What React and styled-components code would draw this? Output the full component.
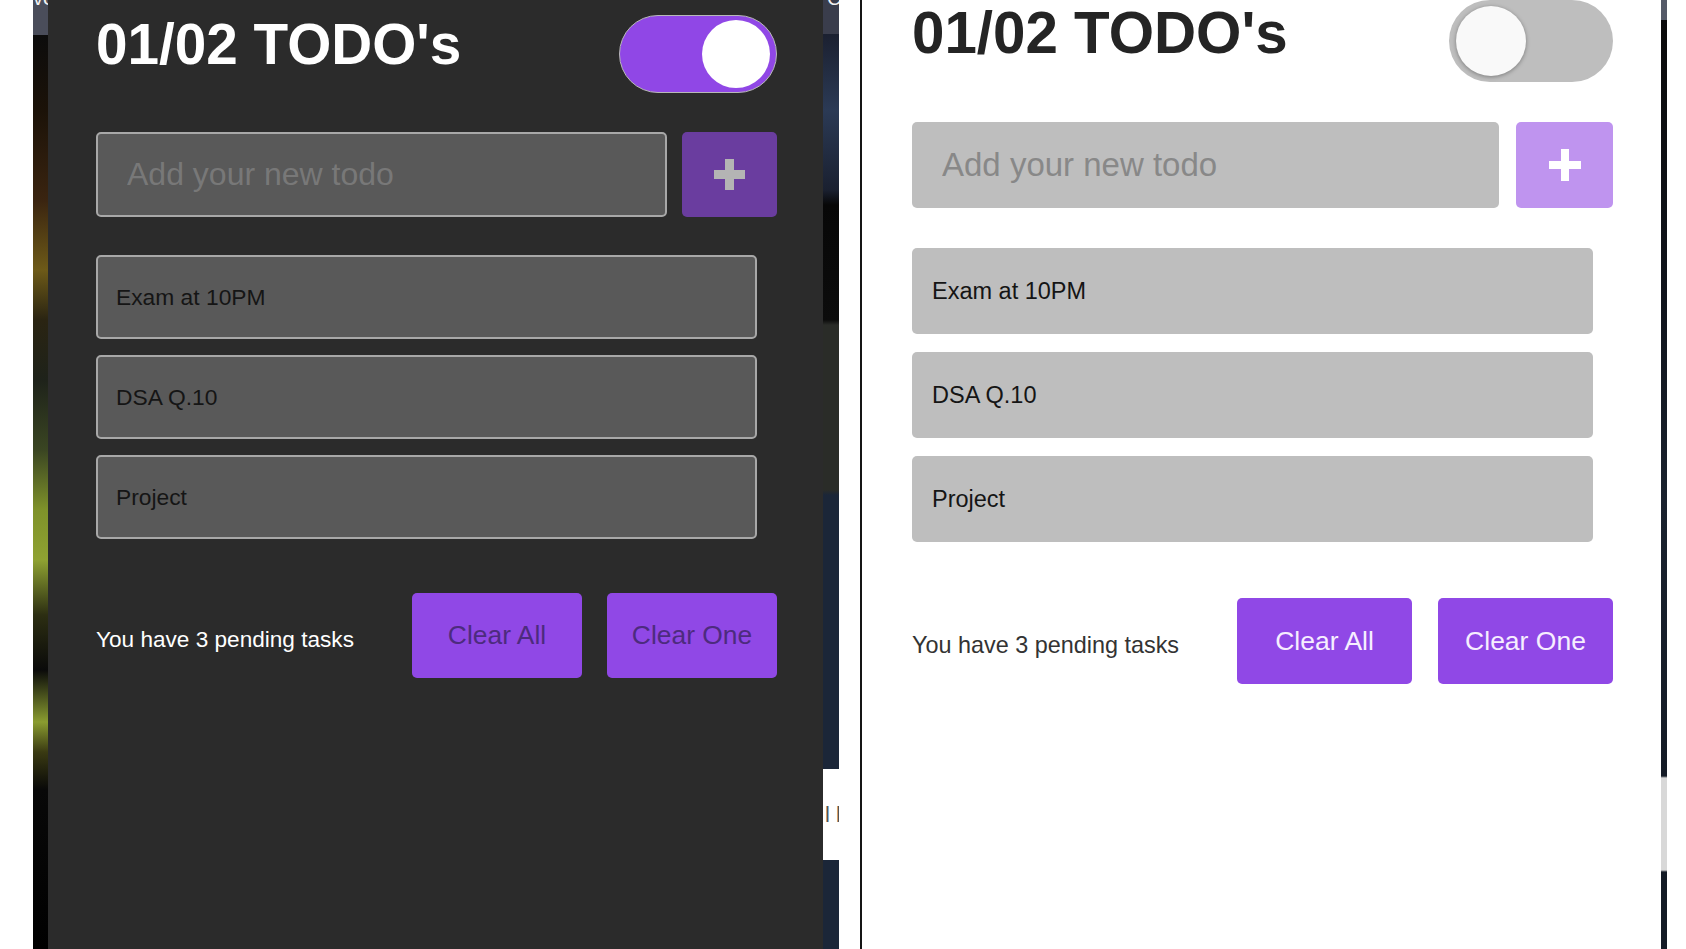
import React from "react";
import styled, { createGlobalStyle } from "styled-components";

const GlobalStyle = createGlobalStyle`
  html, body { margin: 0; padding: 0; background: #fff; }
  body { font-family: "Liberation Sans", Arial, sans-serif; }
  * { box-sizing: border-box; }
`;

const Page = styled.div`
  display: flex;
  width: 1686px;
  height: 949px;
  overflow: hidden;
  background: #fff;
`;

const Desktop = styled.div`
  display: flex;
  margin-left: 33px;
  height: 100%;
`;

const WallStrip = styled.div`
  width: ${(p) => p.$w}px;
  height: 100%;
  flex-shrink: 0;
  display: flex;
  flex-direction: column;
  overflow: hidden;
  background: ${(p) => p.$bg};
`;

const TabGlyph = styled.span`
  display: block;
  margin-top: -13px;
  font-size: 20px;
  line-height: 22px;
  color: #f2f2f2;
  white-space: nowrap;
  padding-left: ${(p) => p.$pl || 0}px;
`;

const NoteChip = styled.div`
  margin-top: ${(p) => p.$top}px;
  height: ${(p) => p.$h}px;
  background: ${(p) => p.$bg};
  color: #555;
  font-size: 22px;
  line-height: ${(p) => p.$h}px;
  white-space: nowrap;
  overflow: hidden;
  padding-left: 2px;
`;

const PhoneShot = styled.div`
  display: flex;
  margin-left: 21px;
  height: 100%;
  border-left: 2px solid #151515;
`;

const Panel = styled.section`
  width: ${(p) => p.$w}px;
  height: 100%;
  flex-shrink: 0;
  background: ${(p) => (p.$dark ? "#2b2b2b" : "#ffffff")};
  padding: ${(p) => p.$pt}px ${(p) => p.$pr}px 0 ${(p) => p.$pl}px;
  display: flex;
  flex-direction: column;
`;

const Header = styled.header`
  display: flex;
  justify-content: space-between;
  align-items: flex-start;
`;

const Title = styled.h1`
  margin: ${(p) => p.$mt}px 0 0;
  font-size: ${(p) => p.$fs}px;
  line-height: 1;
  font-weight: 700;
  color: ${(p) => (p.$dark ? "#ffffff" : "#242424")};
`;

const Toggle = styled.div`
  width: ${(p) => p.$w}px;
  height: ${(p) => p.$h}px;
  flex-shrink: 0;
  border-radius: 999px;
  background: ${(p) => (p.$on ? "#9047e6" : "#bebebe")};
  border: ${(p) => (p.$on ? "1.5px solid #b8b8b8" : "none")};
  display: flex;
  align-items: center;
  justify-content: ${(p) => (p.$on ? "flex-end" : "flex-start")};
  padding: 0 ${(p) => p.$pad}px;
`;

const Knob = styled.span`
  width: ${(p) => p.$d}px;
  height: ${(p) => p.$d}px;
  border-radius: 50%;
  background: ${(p) => (p.$on ? "#ffffff" : "#f9f9f9")};
  box-shadow: ${(p) => (p.$on ? "none" : "0 1px 4px rgba(0,0,0,0.35)")};
`;

const InputRow = styled.div`
  display: flex;
  gap: ${(p) => p.$gap}px;
  margin-top: ${(p) => p.$mt}px;
`;

const TodoInput = styled.input`
  flex: 1;
  min-width: 0;
  height: ${(p) => p.$h}px;
  margin: 0;
  background: ${(p) => (p.$dark ? "#595959" : "#bebebe")};
  border: ${(p) => (p.$dark ? "2px solid #a8a8a8" : "none")};
  border-radius: 5px;
  padding: 0 0 0 ${(p) => p.$pl}px;
  font-family: "Liberation Sans", Arial, sans-serif;
  font-size: ${(p) => p.$fs}px;
  color: #222;
  outline: none;
  &::placeholder {
    color: ${(p) => (p.$dark ? "#787878" : "#888888")};
  }
`;

const AddButton = styled.button`
  width: ${(p) => p.$w}px;
  height: ${(p) => p.$h}px;
  flex-shrink: 0;
  border: none;
  border-radius: 5px;
  padding: 0;
  background: ${(p) => (p.$dark ? "#6a3d9f" : "#bf94ef")};
  display: flex;
  align-items: center;
  justify-content: center;
`;

const TodoList = styled.ul`
  list-style: none;
  margin: ${(p) => p.$mt}px 20px 0 0;
  padding: 0;
  display: flex;
  flex-direction: column;
  gap: ${(p) => p.$gap}px;
`;

const TodoItem = styled.li`
  height: ${(p) => p.$h}px;
  background: ${(p) => (p.$dark ? "#595959" : "#bebebe")};
  border: ${(p) => (p.$dark ? "2px solid #a8a8a8" : "none")};
  border-radius: 5px;
  display: flex;
  align-items: center;
  padding-left: ${(p) => p.$pl}px;
  font-size: ${(p) => p.$fs}px;
  color: #151515;
`;

const Footer = styled.footer`
  display: flex;
  align-items: center;
  justify-content: space-between;
  margin-top: ${(p) => p.$mt}px;
`;

const Pending = styled.span`
  padding-top: 8px;
  font-size: ${(p) => p.$fs}px;
  color: ${(p) => (p.$dark ? "#ffffff" : "#333333")};
`;

const ButtonGroup = styled.div`
  display: flex;
  gap: ${(p) => p.$gap}px;
`;

const ClearButton = styled.button`
  width: ${(p) => p.$w}px;
  height: ${(p) => p.$h}px;
  border: none;
  border-radius: 5px;
  background: #9048e6;
  color: ${(p) => (p.$dark ? "#4d2b7e" : "#f6eeff")};
  font-family: "Liberation Sans", Arial, sans-serif;
  font-size: ${(p) => p.$fs}px;
  padding: 0;
`;

const PlusIcon = ({ size, thick, color }) => (
  <svg width={size} height={size} viewBox={`0 0 ${size} ${size}`}>
    <rect x={(size - thick) / 2} y={0} width={thick} height={size} fill={color} />
    <rect x={0} y={(size - thick) / 2} width={size} height={thick} fill={color} />
  </svg>
);

const TODOS = ["Exam at 10PM", "DSA Q.10", "Project"];

const TodoCard = ({ c }) => (
  <Panel $dark={c.dark} $w={c.w} $pt={c.pt} $pl={c.pl} $pr={c.pr}>
    <Header>
      <Title $dark={c.dark} $fs={c.titleFs} $mt={c.titleMt}>
        01/02 TODO's
      </Title>
      <Toggle $on={c.dark} $w={c.tog.w} $h={c.tog.h} $pad={c.tog.pad}>
        <Knob $on={c.dark} $d={c.tog.d} />
      </Toggle>
    </Header>
    <InputRow $gap={c.inp.gap} $mt={c.inp.mt}>
      <TodoInput
        $dark={c.dark}
        $h={c.inp.h}
        $pl={c.inp.pl}
        $fs={c.inp.fs}
        placeholder="Add your new todo"
        readOnly
      />
      <AddButton $dark={c.dark} $w={c.inp.bw} $h={c.inp.h} aria-label="Add">
        <PlusIcon size={c.plus.size} thick={c.plus.thick} color={c.plus.color} />
      </AddButton>
    </InputRow>
    <TodoList $mt={c.list.mt} $gap={c.list.gap}>
      {TODOS.map((t) => (
        <TodoItem key={t} $dark={c.dark} $h={c.list.h} $pl={c.list.pl} $fs={c.list.fs}>
          {t}
        </TodoItem>
      ))}
    </TodoList>
    <Footer $mt={c.foot.mt}>
      <Pending $dark={c.dark} $fs={c.foot.fs}>
        You have 3 pending tasks
      </Pending>
      <ButtonGroup $gap={c.foot.gap}>
        <ClearButton $dark={c.dark} $w={c.foot.bw} $h={c.foot.bh} $fs={c.foot.bfs}>
          Clear All
        </ClearButton>
        <ClearButton $dark={c.dark} $w={c.foot.bw} $h={c.foot.bh} $fs={c.foot.bfs}>
          Clear One
        </ClearButton>
      </ButtonGroup>
    </Footer>
  </Panel>
);

const DARK = {
  dark: true,
  w: 775,
  pt: 15,
  pl: 48,
  pr: 46,
  titleFs: 56.7,
  titleMt: 1.5,
  tog: { w: 158, h: 78, pad: 6, d: 68 },
  inp: { mt: 39, h: 85, gap: 15, bw: 95, pl: 29, fs: 32 },
  plus: { size: 31, thick: 9, color: "#b4b4b4" },
  list: { mt: 38, gap: 16, h: 84, pl: 18, fs: 22.8 },
  foot: { mt: 54, fs: 22.6, gap: 25, bw: 170, bh: 85, bfs: 26.4 },
};

const LIGHT = {
  dark: false,
  w: 799,
  pt: 0,
  pl: 50,
  pr: 48,
  titleFs: 58.3,
  titleMt: 3.5,
  tog: { w: 164, h: 82, pad: 7, d: 70 },
  inp: { mt: 40, h: 86, gap: 17, bw: 97, pl: 30, fs: 33 },
  plus: { size: 32, thick: 8, color: "#ffffff" },
  list: { mt: 40, gap: 18, h: 86, pl: 20, fs: 23.5 },
  foot: { mt: 56, fs: 23.4, gap: 26, bw: 175, bh: 86, bfs: 26.5 },
};

const LEFT_WALL = `linear-gradient(to bottom,
  #4a4d5a 0, #4a4d5a 35px, #0c0c0c 35px, #1b1208 110px, #3a2410 200px,
  #6d5a18 270px, #2a2412 320px, #1e221a 380px, #3a4522 450px, #7f922a 510px,
  #8fa232 560px, #2c2e12 615px, #0a0a0a 670px, #8a9c30 722px, #3a3a12 752px,
  #080808 790px, #000000 949px)`;

const RIGHT_WALL = `linear-gradient(to bottom,
  #3a3d4c 0, #3a3d4c 34px, #1b2030 34px, #2b3a55 110px, #1a2030 190px,
  #070707 205px, #0c0c0c 320px, #2a2c28 325px, #2a2c28 490px,
  #1b2638 495px, #1b2638 949px)`;

const EDGE_WALL = `linear-gradient(to bottom,
  #555a68 0, #555a68 20px, #0b0b0b 20px, #10141c 300px, #1a222e 500px,
  #141b26 776px, #d8d8d8 778px, #d8d8d8 870px, #141b26 872px, #141b26 949px)`;

export default function App() {
  return (
    <>
      <GlobalStyle />
      <Page>
        <Desktop>
          <WallStrip $w={15} $bg={LEFT_WALL}>
            <TabGlyph>ve</TabGlyph>
          </WallStrip>
          <TodoCard c={DARK} />
          <WallStrip $w={16} $bg={RIGHT_WALL}>
            <TabGlyph $pl={4}>C</TabGlyph>
            <NoteChip $top={769 - 9} $h={91} $bg="#ffffff">
              l b
            </NoteChip>
          </WallStrip>
        </Desktop>
        <PhoneShot>
          <TodoCard c={LIGHT} />
          <WallStrip $w={6} $bg={EDGE_WALL} />
        </PhoneShot>
      </Page>
    </>
  );
}
